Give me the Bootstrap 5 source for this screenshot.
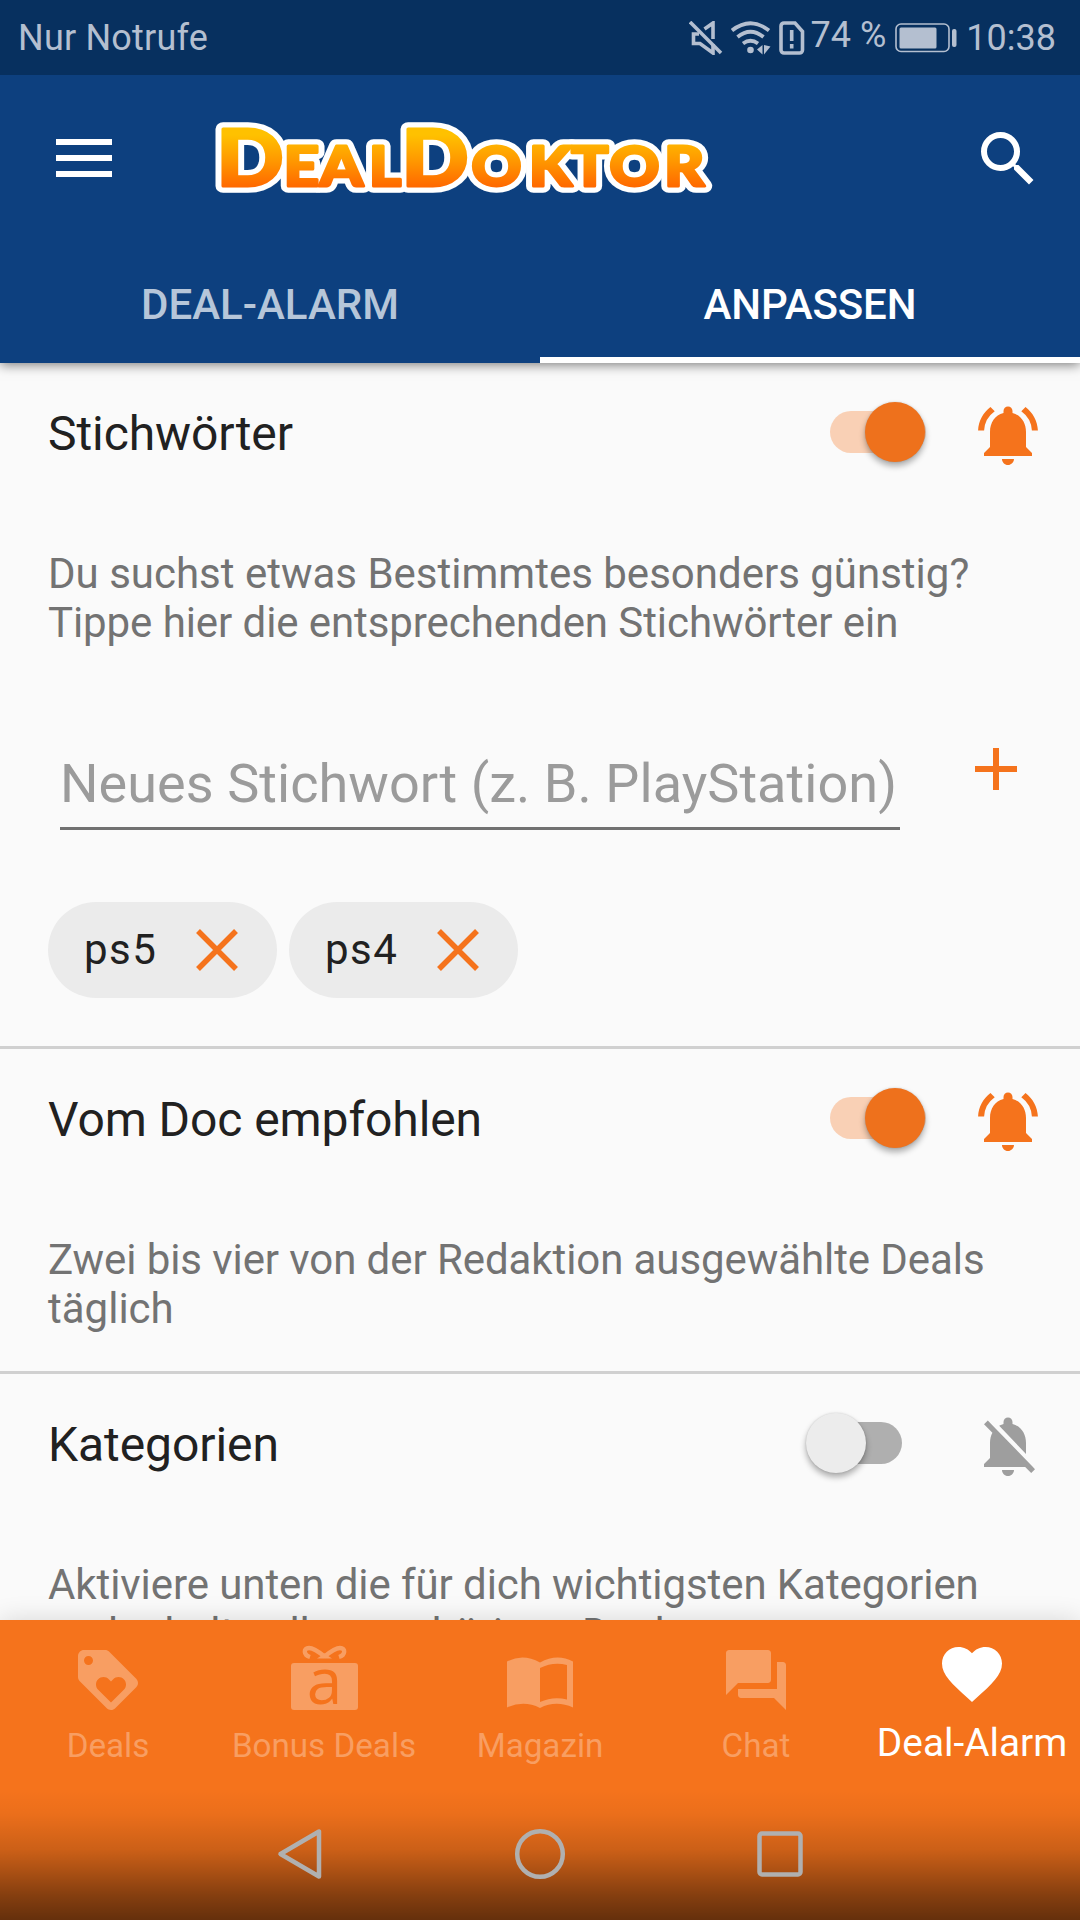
<!DOCTYPE html>
<html lang="de">
<head>
<meta charset="utf-8">
<meta name="viewport" content="width=device-width, initial-scale=1">
<title>DealDoktor – Deal-Alarm</title>
<link rel="stylesheet" href="https://cdn.jsdelivr.net/npm/bootstrap@5.3.0/dist/css/bootstrap.min.css">
<style>
  :root { --dd-orange: #f5731c; --dd-blue: #0d407f; --dd-status: #b4bfd0; }
  html, body { height: 1920px; overflow: hidden; }
  body { font-family: Roboto, "Liberation Sans", sans-serif; background: #fafafa; color: #212121; width: 1080px; }
  svg { display: block; flex: none; }
  .phone-screen { height: 1920px; }
  .status-strip { height: 75px; background: #07305f; color: var(--dd-status); font-size: 36px; line-height: 42px; padding: 0 24px 0 18px; }
  .status-strip .carrier { letter-spacing: .2px; }
  .status-strip .pct { margin-left: 6px; padding-bottom: 6px; }
  .status-strip .after-gap { margin-left: 9px; }
  .top-area { background: var(--dd-blue); box-shadow: 0 2px 11px rgba(0,0,0,.5); z-index: 2; }
  .app-toolbar { height: 168px; padding: 0 36px 0 56px; }
  .menu-icon { margin-bottom: 2px; }
  .brand-logo { margin-left: 96px; overflow: visible; }
  .tab-row { height: 120px; }
  .tab-row .nav-link { font-size: 42px; font-weight: 500; line-height: 49px; color: #b6c6d9; border-radius: 0; padding: 37px 0 28px; border-bottom: 6px solid transparent; }
  .tab-row .nav-link.active { color: #fff; border-bottom-color: #fff; letter-spacing: -.1px; }
  .content-area { min-height: 0; }
  .alarm-section { padding: 0 48px; border-bottom: 3px solid #d0d0d0; }
  .section-keywords { height: 686px; }
  .section-doc { height: 325px; }
  .section-head { height: 186px; padding-top: 36px; margin-right: -12px; }
  .section-head h2 { font-size: 48px; line-height: 56px; font-weight: 400; padding-top: 7px; letter-spacing: -.08px; }
  .section-desc { font-size: 42px; line-height: 49px; color: #737373; white-space: nowrap; }
  .section-desc .tighter { letter-spacing: -.08px; }
  .alarm-toggle { width: 132px; height: 66px; margin-right: 28px; }
  .alarm-toggle i { display: block; }
  .toggle-track { width: 96px; height: 42px; border-radius: 21px; background: #f9d0b5; margin: 0 18px; }
  .toggle-thumb { width: 60px; height: 60px; border-radius: 50%; background: #ee711c; margin-top: -9px; margin-left: 35px; box-shadow: 0 4px 6px rgba(0,0,0,.32), 0 0 2px rgba(0,0,0,.15); }
  .alarm-toggle .toggle-track { display: flow-root; }
  .toggle-off .toggle-track { background: #afafaf; margin-left: 0; width: 90px; }
  .toggle-off .toggle-thumb { background: #ececec; margin-left: -6px; }
  .keyword-row { padding: 0 15px 0 12px; margin-top: 104px; }
  .keyword-row svg { margin-top: -3px; }
  .keyword-input { width: 840px; border: 0; border-bottom: 3px solid #717171; border-radius: 0; background: transparent; font-size: 54px; line-height: 64px; letter-spacing: .06px; padding: 1px 0 12px; height: 79px; }
  .keyword-input::placeholder { color: #9b9b9b; opacity: 1; }
  .chip-row { margin-top: 72px; gap: 12px; }
  .keyword-chip { width: 229px; height: 96px; background: #ebebeb; font-size: 42px; line-height: 49px; letter-spacing: 1.5px; padding: 0 39px 0 36px; }
  .keyword-chip b { font-weight: 400; margin-bottom: 2px; }
  .bottom-area { height: 300px; background: var(--dd-orange); box-shadow: 0 0 24px rgba(0,0,0,.14); z-index: 2; }
  .bottom-tabs { height: 156px; }
  .bottom-tabs .nav-link { width: 216px; color: #f89e62; padding: 24px 0 0; font-size: 33.2px; line-height: 40px; white-space: nowrap; }
  .bottom-tabs .nav-link span { margin-top: 10px; }
  .bottom-tabs .nav-link.active { color: #fff; padding-top: 18px; font-size: 38.8px; line-height: 46px; }
  .bottom-tabs .nav-link.active span { margin-top: 10px; }
  .system-nav { height: 144px; padding: 12px 276px 0; background: linear-gradient(rgba(0,0,0,0) 10%, rgba(0,0,0,.04) 26%, rgba(0,0,0,.17) 51%, rgba(0,0,0,.31) 67%, rgba(0,0,0,.46) 83%, rgba(0,0,0,.59)); }
</style>
</head>
<body>
<svg width="0" height="0" class="position-absolute" aria-hidden="true">
  <symbol id="bell-on" viewBox="0 0 24 24"><path d="M7.58 4.08 6.15 2.65C3.75 4.48 2.17 7.3 2.03 10.5h2a8.445 8.445 0 0 1 3.55-6.42zm12.39 6.42h2c-.15-3.2-1.73-6.02-4.12-7.85l-1.42 1.43a8.495 8.495 0 0 1 3.54 6.42zM18 11c0-3.07-1.64-5.64-4.5-6.32V4c0-.83-.67-1.5-1.5-1.5s-1.5.67-1.5 1.5v.68C7.63 5.36 6 7.92 6 11v5l-2 2v1h16v-1l-2-2v-5zm-6 11c.14 0 .27-.01.4-.04.65-.14 1.18-.58 1.44-1.18.1-.24.15-.5.15-.78h-4c.01 1.1.9 2 2.01 2z"/></symbol>
  <symbol id="bell-off" viewBox="0 0 24 24"><path d="M20 18.69 7.84 6.14 5.27 3.49 4 4.76l2.8 2.8v.01c-.52.99-.8 2.16-.8 3.42v5l-2 2v1h13.73l2 2L21 19.72l-1-1.03zM12 22c1.11 0 2-.89 2-2h-4c0 1.110.89 2 2 2zm6-7.320V11c0-3.080-1.640-5.640-4.500-6.320V4c0-.83-.67-1.500-1.500-1.500s-1.500.67-1.500 1.500v.68c-.15.03-.29.08-.42.12-.1.03-.2.07-.3.11h-.01c-.01 0-.01 0-.02.01-.23.09-.46.2-.68.31 0 0-.01 0-.01.01L18 14.680z"/></symbol>
</svg>
<div class="phone-screen d-flex flex-column overflow-hidden">
  <header class="top-area position-relative flex-shrink-0">
    <div class="status-strip d-flex align-items-center">
      <span class="carrier me-auto">Nur Notrufe</span>
      <svg width="34" height="34" viewBox="0 0 34 34" fill="none" stroke="#b4bfd0" stroke-width="3.600"><path d="M1 1 32 32"/><path d="M10 13H4.500v9.500H11l13 9.500v-9M15.500 8 24 2v16"/></svg>
      <svg class="ms-2" width="40" height="34" viewBox="0 0 40 34" fill="none" stroke="#b4bfd0" stroke-width="3.800"><path d="M1 9.500Q19.500-5 38 9.500M6.500 16Q19.500 5.500 32.500 16M12 22.500Q19.500 17 27 22.500"/><circle cx="19.500" cy="29" r="3.300" fill="#b4bfd0" stroke="none"/><path d="M26 28.500l5.500-4.500v9.500zM33 24v9.500l6.500-8z" fill="#b4bfd0" stroke="none"/></svg>
      <svg class="ms-2" width="26" height="34" viewBox="0 0 26 34" fill="none" stroke="#b4bfd0" stroke-width="3.600"><path d="M5 2h11l7.500 8.500V29a3 3 0 0 1-3 3H5a3 3 0 0 1-3-3V5a3 3 0 0 1 3-3z"/><path d="M12.700 9v11M12.700 23v4.500"/></svg>
      <span class="pct">74 %</span>
      <svg class="after-gap" width="62" height="30" viewBox="0 0 62 30"><rect x="1" y="1" width="53" height="27.500" rx="5" fill="none" stroke="#b4bfd0" stroke-width="1.600"/><rect x="4.500" y="4.500" width="37" height="21" rx="1.500" fill="#b4bfd0"/><rect x="57" y="6" width="4.500" height="18" rx="2" fill="#b4bfd0"/></svg>
      <span class="after-gap">10:38</span>
    </div>
    <div class="app-toolbar d-flex align-items-center">
      <svg class="menu-icon" width="56" height="38" viewBox="0 0 56 38" fill="#fff"><path d="M0 0h56v6H0zM0 16h56v6H0zM0 32h56v6H0z"/></svg>
      <svg class="brand-logo me-auto" width="510" height="110" viewBox="208 104 510 110">
        <defs><linearGradient id="logoFill" gradientUnits="userSpaceOnUse" x1="0" y1="129" x2="0" y2="187"><stop offset=".1" stop-color="#ffc100"/><stop offset=".55" stop-color="#ff9800"/><stop offset="1" stop-color="#ff6800"/></linearGradient></defs>
        <g transform="scale(1.13 1)" font-family="Lato, sans-serif" font-weight="900" font-size="54.500" text-anchor="middle" stroke-linejoin="round">
          <g fill="#fff" stroke="#fff" stroke-width="13.500"><text id="brandWord" y="186.500"><tspan x="221.300" font-size="78">D</tspan><tspan x="266.800 302.200 340.700">EAL</tspan><tspan x="385" font-size="78">D</tspan><tspan x="439.400 487 522.100 561.500 605.500">OKTOR</tspan></text></g>
          <use href="#brandWord" fill="url(#logoFill)" stroke="url(#logoFill)" stroke-width="3"/>
        </g>
      </svg>
      <svg width="72" height="72" viewBox="0 0 24 24" fill="#fff"><path d="M15.500 14h-.79l-.28-.27A6.471 6.471 0 0 0 16 9.500 6.500 6.500 0 1 0 9.500 16c1.610 0 3.090-.59 4.230-1.570l.27.28v.79l5 4.990L20.490 19l-4.990-5zm-6 0C7.010 14 5 11.990 5 9.500S7.010 5 9.500 5 14 7.010 14 9.500 11.990 14 9.500 14z"/></svg>
    </div>
    <nav class="tab-row nav nav-fill flex-nowrap">
      <a class="nav-link w-50" href="#">DEAL-ALARM</a>
      <a class="nav-link w-50 active" href="#">ANPASSEN</a>
    </nav>
  </header>

  <main class="content-area flex-grow-1 overflow-hidden">
    <section class="alarm-section section-keywords">
      <div class="section-head d-flex align-items-start">
        <h2 class="mb-0 me-auto">Stichwörter</h2>
        <div class="alarm-toggle d-flex align-items-center"><i class="toggle-track"><i class="toggle-thumb"></i></i></div>
        <svg width="72" height="72" fill="#f5731c"><use href="#bell-on"/></svg>
      </div>
      <p class="section-desc mb-0">Du suchst etwas Bestimmtes besonders günstig?<br><span class="tighter">Tippe hier die entsprechenden Stichwörter ein</span></p>
      <div class="keyword-row d-flex justify-content-between">
        <input class="keyword-input form-control flex-shrink-0" type="text" placeholder="Neues Stichwort (z. B. PlayStation)">
        <svg width="42" height="42" viewBox="0 0 42 42" fill="#f5731c"><path d="M18 0h6v18h18v6H24v18h-6V24H0v-6h18z"/></svg>
      </div>
      <div class="chip-row d-flex">
        <span class="keyword-chip rounded-pill d-flex align-items-center justify-content-between"><b>ps5</b> <svg width="42" height="42" viewBox="0 0 42 42" stroke="#f5731c" stroke-width="5.500"><path d="M2 2 40 40M40 2 2 40"/></svg></span>
        <span class="keyword-chip rounded-pill d-flex align-items-center justify-content-between"><b>ps4</b> <svg width="42" height="42" viewBox="0 0 42 42" stroke="#f5731c" stroke-width="5.500"><path d="M2 2 40 40M40 2 2 40"/></svg></span>
      </div>
    </section>
    <section class="alarm-section section-doc">
      <div class="section-head d-flex align-items-start">
        <h2 class="mb-0 me-auto">Vom Doc empfohlen</h2>
        <div class="alarm-toggle d-flex align-items-center"><i class="toggle-track"><i class="toggle-thumb"></i></i></div>
        <svg width="72" height="72" fill="#f5731c"><use href="#bell-on"/></svg>
      </div>
      <p class="section-desc mb-0"><span class="tighter">Zwei bis vier von der Redaktion ausgewählte Deals</span><br>täglich</p>
    </section>
    <section class="alarm-section">
      <div class="section-head d-flex align-items-start">
        <h2 class="mb-0 me-auto">Kategorien</h2>
        <div class="alarm-toggle toggle-off d-flex align-items-center"><i class="toggle-track"><i class="toggle-thumb"></i></i></div>
        <svg width="72" height="72" fill="#9e9e9e"><use href="#bell-off"/></svg>
      </div>
      <p class="section-desc mb-0"><span class="tighter">Aktiviere unten die für dich wichtigsten Kategorien<br>und erhalte alle zugehörigen Deals</span></p>
    </section>
  </main>

  <footer class="bottom-area position-relative flex-shrink-0">
    <nav class="bottom-tabs nav flex-nowrap">
      <a class="nav-link d-flex flex-column align-items-center" href="#">
        <svg width="72" height="72" viewBox="0 0 24 24" fill="currentColor"><path d="M21.410 11.580l-9-9C12.050 2.220 11.550 2 11 2H4c-1.100 0-2 .9-2 2v7c0 .55.22 1.050.59 1.420l9 9c.36.36.86.58 1.410.58s1.050-.22 1.410-.59l7-7c.37-.36.59-.86.59-1.410s-.23-1.060-.59-1.420zM5.500 7C4.670 7 4 6.330 4 5.500S4.670 4 5.500 4 7 4.670 7 5.500 6.330 7 5.500 7zm11.770 8.270L13 19.540l-4.270-4.270C8.280 14.810 8 14.190 8 13.500c0-1.380 1.120-2.500 2.500-2.500.69 0 1.320.28 1.770.74l.73.72.73-.73c.45-.45 1.080-.73 1.770-.73 1.380 0 2.500 1.120 2.500 2.500 0 .69-.28 1.320-.73 1.770z"/></svg>
        <span>Deals</span>
      </a>
      <a class="nav-link d-flex flex-column align-items-center" href="#">
        <svg width="72" height="72" viewBox="0 0 72 72" overflow="visible"><rect x="3" y="19" width="67" height="47" rx="3" fill="currentColor"/><path d="M36.500 12.500C31 8 26 4 21 4c-6 0-5.500 7 1 9M36.500 12.500C42 8 47 4 52 4c6 0 5.500 7-1 9" fill="none" stroke="currentColor" stroke-width="4.400"/><path d="M29 14.500l7.500-5 7.500 5z" fill="currentColor"/><text x="36.500" y="60" text-anchor="middle" font-family="'Open Sans', sans-serif" font-size="64" fill="#f5731c">a</text></svg>
        <span>Bonus Deals</span>
      </a>
      <a class="nav-link d-flex flex-column align-items-center" href="#">
        <svg width="72" height="72" viewBox="0 0 72 72" fill="currentColor" fill-rule="evenodd"><path d="M3 17.500Q19 9 36 18.500 53 9 69 17.500V63.500Q52 56 36 64 20 56 3 63.500zM36 24V58Q49 52 63 55.500V21Q49 17.500 36 24z"/></svg>
        <span>Magazin</span>
      </a>
      <a class="nav-link d-flex flex-column align-items-center" href="#">
        <svg width="72" height="72" viewBox="0 0 24 24" fill="currentColor"><path d="M21 6h-2v9H6v2c0 .55.45 1 1 1h11l4 4V7c0-.55-.45-1-1-1zm-4 6V3c0-.55-.45-1-1-1H3c-.55 0-1 .45-1 1v14l4-4h10c.55 0 1-.45 1-1z"/></svg>
        <span>Chat</span>
      </a>
      <a class="nav-link active d-flex flex-column align-items-center" href="#">
        <svg width="72" height="72" viewBox="0 0 24 24" fill="currentColor"><path d="M12 21.350l-1.450-1.320C5.400 15.360 2 12.280 2 8.500 2 5.420 4.420 3 7.500 3c1.740 0 3.410.81 4.500 2.090C13.090 3.810 14.760 3 16.500 3 19.580 3 22 5.420 22 8.500c0 3.780-3.400 6.860-8.550 11.540L12 21.350z"/></svg>
        <span>Deal-Alarm</span>
      </a>
    </nav>
    <div class="system-nav d-flex align-items-center justify-content-between">
      <svg width="48" height="54" viewBox="0 0 48 54" fill="none" stroke="#b0b0b0" stroke-width="4.500" stroke-linejoin="round"><path d="M4.500 27 43 4.500v45z"/></svg>
      <svg width="54" height="54" viewBox="0 0 54 54" fill="none" stroke="#b0b0b0" stroke-width="4.500"><circle cx="27" cy="27" r="22.800"/></svg>
      <svg width="48" height="54" viewBox="0 0 48 54" fill="none" stroke="#b0b0b0" stroke-width="4.500"><rect x="3.500" y="6.500" width="41" height="41" rx="2.500"/></svg>
    </div>
  </footer>
</div>
<script src="https://cdn.jsdelivr.net/npm/bootstrap@5.3.0/dist/js/bootstrap.bundle.min.js"></script>
</body>
</html>
